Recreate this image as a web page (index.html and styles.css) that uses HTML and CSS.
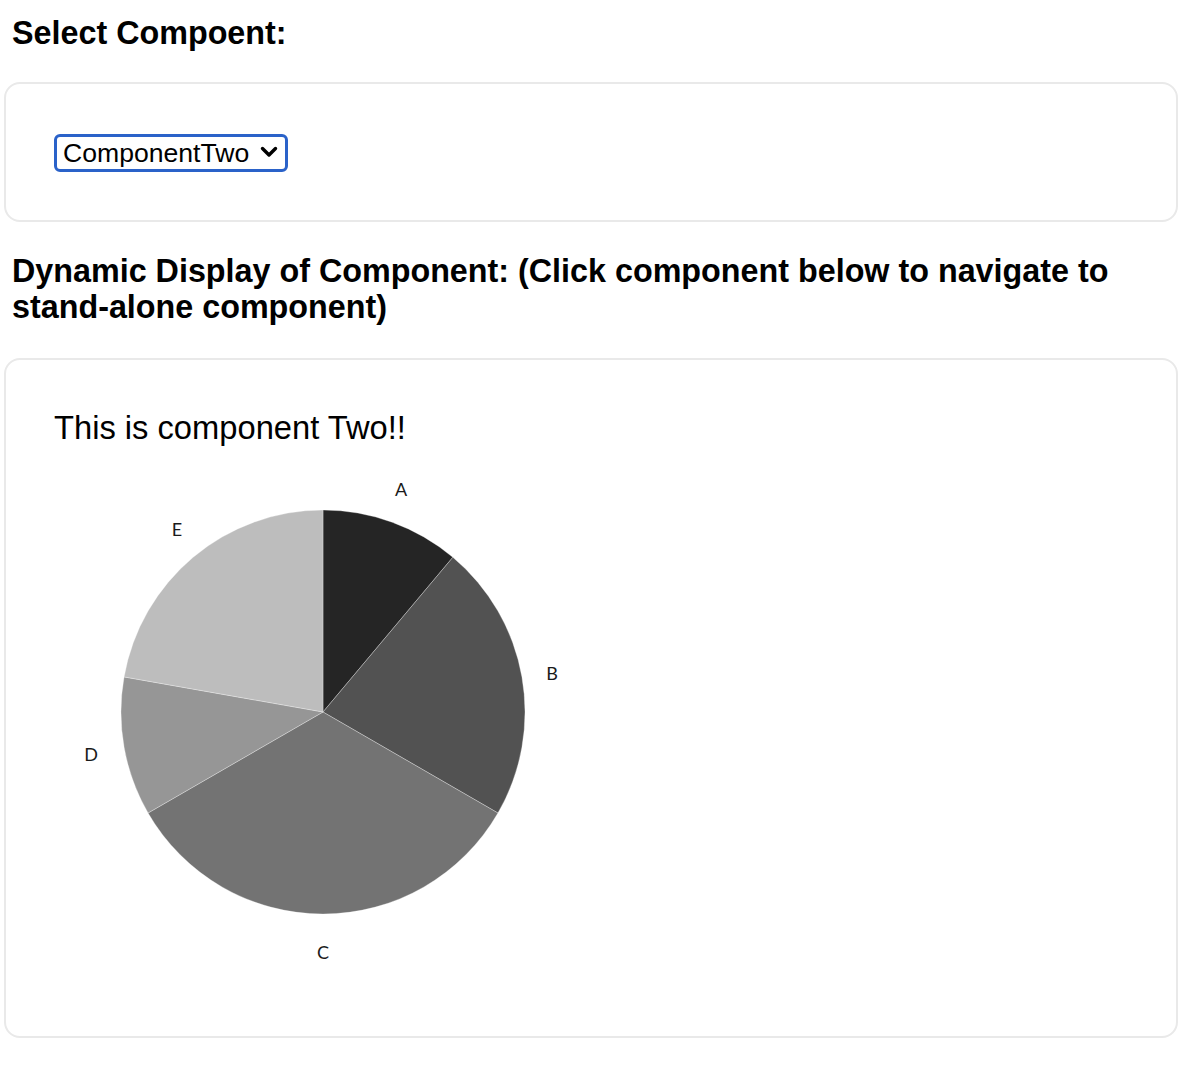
FILE: index.html
```html
<!DOCTYPE html>
<html lang="en">
<head>
<meta charset="utf-8">
<title>Select Component</title>
<link rel="stylesheet" href="styles.css">
</head>
<body>
<div class="page">
  <h2 class="heading heading-first">Select Compoent:</h2>
  <div class="card card-select">
    <span class="select-wrap">
      <select class="select">
        <option>ComponentOne</option>
        <option selected>ComponentTwo</option>
      </select>
      <svg class="chevron" width="18" height="12" viewBox="0 0 18 12" aria-hidden="true">
        <path d="M2.5 2.5 L9 9 L15.5 2.5" fill="none" stroke="#000" stroke-width="3.4" stroke-linecap="round" stroke-linejoin="round"/>
      </svg>
    </span>
  </div>
  <h2 class="heading heading-second">Dynamic Display of Component: (Click component below to navigate to stand-alone component)</h2>
  <div class="card card-display">
    <div class="comp-text">This is component Two!!</div>
    <svg class="pie" width="540" height="540" viewBox="0 0 540 540">
      <g class="slices">
        <path d="M269,266 L269,64 A202,202 0 0 1 398.84,111.26 Z" fill="#252525"/>
        <path d="M269,266 L398.84,111.26 A202,202 0 0 1 443.94,367 Z" fill="#525252"/>
        <path d="M269,266 L443.94,367 A202,202 0 0 1 94.06,367 Z" fill="#737373"/>
        <path d="M269,266 L94.06,367 A202,202 0 0 1 70.07,230.92 Z" fill="#969696"/>
        <path d="M269,266 L70.07,230.92 A202,202 0 0 1 269,64 Z" fill="#bdbdbd"/>
      </g>
      <g class="labels">
        <text x="347" y="43">A</text>
        <text x="498" y="227">B</text>
        <text x="269" y="506">C</text>
        <text x="37" y="308">D</text>
        <text x="123" y="83">E</text>
      </g>
    </svg>
  </div>
</div>
</body>
</html>
```
FILE: styles.css
```css
html, body {
  margin: 0;
  padding: 0;
  background: #fff;
}

body {
  font-family: "Liberation Sans", Arial, Helvetica, sans-serif;
  color: #000;
}

.page {
  padding: 0 18px 40px 4px;
}

.heading {
  margin: 0;
  padding: 0 8px;
  font-size: 32.3px;
  line-height: 36px;
  font-weight: 700;
}

.heading-first {
  margin-top: 15px;
}

.heading-second {
  margin-top: 31px;
}

.card {
  border: 2px solid #e9e9e9;
  border-radius: 16px;
  background: #fff;
}

.card-select {
  margin-top: 31px;
  padding: 50px 48px 48px;
  height: 38px;
}

.card-display {
  margin-top: 33px;
  padding: 49px 48px 50px;
}

.select-wrap {
  position: relative;
  display: inline-block;
  width: 234px;
  height: 38px;
}

.select {
  appearance: none;
  -webkit-appearance: none;
  box-sizing: border-box;
  width: 234px;
  height: 38px;
  margin: 0;
  padding: 0 0 0 6px;
  border: 3px solid #2a62c9;
  border-radius: 6px;
  background: #fff;
  color: #000;
  font-family: "Liberation Sans", Arial, Helvetica, sans-serif;
  font-size: 26.6px;
  line-height: 32px;
  outline: none;
}

.chevron {
  position: absolute;
  left: 206px;
  top: 12px;
  pointer-events: none;
}

.comp-text {
  font-size: 32.7px;
  line-height: 37px;
  font-weight: 400;
}

.pie {
  display: block;
}

.slices path {
  stroke: #ffffff;
  stroke-width: 0.6;
  stroke-opacity: 0.5;
}

.labels text {
  font-family: Lato, "Noto Sans", sans-serif;
  font-size: 18px;
  fill: #1a1a1a;
  text-anchor: middle;
  dominant-baseline: central;
}
```
